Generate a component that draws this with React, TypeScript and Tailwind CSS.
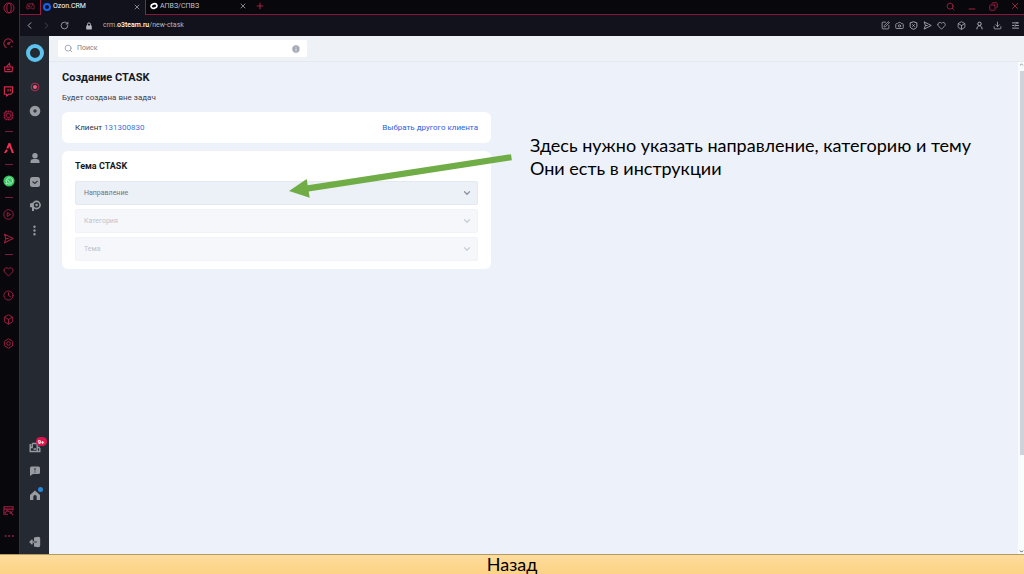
import type { ReactNode } from "react";
import {
  Box,
  Camera,
  ChevronDown,
  ChevronLeft,
  ChevronRight,
  ChevronUp,
  Clock,
  Copy,
  Cpu,
  Download,
  Ellipsis,
  EllipsisVertical,
  Gamepad2,
  Heart,
  Hexagon,
  Info,
  Lock,
  Minus,
  Plus,
  RotateCw,
  Search,
  SquarePen,
  Twitch,
  X,
} from "lucide-react";

function IconButton({ label, className = "", children }: { label: string; className?: string; children: ReactNode }) {
  return (
    <button type="button" aria-label={label} className={`flex shrink-0 items-center justify-center ${className}`}>
      {children}
    </button>
  );
}

function RailButton({ label, children }: { label: string; children: ReactNode }) {
  return (
    <IconButton label={label} className="h-6 w-full">
      {children}
    </IconButton>
  );
}

function Divider() {
  return (
    <div className="flex h-[9px] w-full items-center justify-center">
      <div className="h-px w-2 bg-[#7d1c38]" />
    </div>
  );
}

function SendIcon({ className }: { className: string }) {
  return (
    <svg viewBox="0 0 12 12" className={className} fill="none" stroke="currentColor" strokeWidth="1.100" strokeLinejoin="round">
      <path d="M1.500 1.200L11 6l-9.500 4.800L3.200 6zM3.200 6h3" />
    </svg>
  );
}

function BrowserRail() {
  return (
    <nav aria-label="Opera" className="flex w-5 shrink-0 flex-col items-center border-r border-[#6d1630] bg-[#07070c] pr-0.5 pb-1.5 text-[#a81f43]">
      <IconButton label="Меню Opera" className="mb-[15px] h-4 w-full">
        <svg viewBox="0 0 12 12" className="size-3" fill="none" stroke="currentColor">
          <circle cx="6" cy="6" r="5" />
          <ellipse cx="6" cy="6" rx="2.2" ry="4.6" />
        </svg>
      </IconButton>
      <RailButton label="GX Control">
        <svg viewBox="0 0 12 12" className="size-[11px]" fill="none" stroke="currentColor" strokeWidth="1.1">
          <path d="M4 10.6A5 5 0 1 1 10.8 5M8.5 9.5h2M6 6l2.5-2" />
          <circle cx="6" cy="6.2" r="1" />
        </svg>
      </RailButton>
      <RailButton label="GX Corner">
        <svg viewBox="0 0 12 12" className="size-[11px] text-[#c3264a]" fill="none" stroke="currentColor" strokeWidth="1.2">
          <path d="M1.500 5.500h9l-.6 5H2.100zM3.500 5.500l3.600-4 1 4M4 8h4" />
        </svg>
      </RailButton>
      <RailButton label="Twitch">
        <Twitch className="size-[11px] text-[#d92a50]" strokeWidth={2.5} />
      </RailButton>
      <RailButton label="Модификации">
        <Cpu className="size-[11px]" />
      </RailButton>
      <Divider />
      <RailButton label="Aria">
        <svg viewBox="0 0 12 12" className="size-3 text-[#f02f55]" fill="currentColor">
          <path d="M5.600 1h1.600l3.800 10H8.800L6.300 4.300 5.200 7 3.400 6.100zM3 7.200l1.900 1L3 11H1z" />
        </svg>
      </RailButton>
      <Divider />
      <RailButton label="WhatsApp">
        <svg viewBox="0 0 12 12" className="size-3" fill="none">
          <circle cx="6" cy="6" r="5.600" fill="#32c45d" />
          <path d="M3 9l.5-1.700A3.200 3.200 0 1 1 4.700 8.600z" stroke="#c8f6d5" strokeWidth=".8" />
          <path d="M4.800 4.500c.2 1.600 1.200 2.600 2.700 2.800" stroke="#c8f6d5" strokeWidth="1" />
        </svg>
      </RailButton>
      <Divider />
      <RailButton label="Плеер">
        <svg viewBox="0 0 12 12" className="size-[11px]" fill="none" stroke="currentColor">
          <circle cx="6" cy="6" r="5.200" />
          <path d="M4.600 3.800v4.400L8.300 6z" />
        </svg>
      </RailButton>
      <RailButton label="Мой поток">
        <SendIcon className="size-[11px]" />
      </RailButton>
      <Divider />
      <RailButton label="Закладки">
        <Heart className="size-[11px]" />
      </RailButton>
      <RailButton label="История">
        <Clock className="size-[11px]" />
      </RailButton>
      <RailButton label="Расширения">
        <Box className="size-[11px]" />
      </RailButton>
      <RailButton label="Настройки">
        <span className="relative flex">
          <Hexagon className="size-[11px]" />
          <svg viewBox="0 0 11 11" className="absolute inset-0 size-[11px]" fill="none" stroke="currentColor">
            <circle cx="5.500" cy="5.500" r="1.800" />
          </svg>
        </span>
      </RailButton>
      <div className="mt-auto flex w-full flex-col gap-0.5">
        <RailButton label="Обои">
          <svg viewBox="0 0 12 12" className="size-[11px]" fill="none" stroke="currentColor" strokeWidth="1.100">
            <path d="M5.500 10H1V2h10v4M1 4.500h10M2 8.500l3-2.500 2 1.500" />
            <path d="M7 9.500l3.500-2.500M7.500 7l3.500 4" />
          </svg>
        </RailButton>
        <RailButton label="Ещё">
          <Ellipsis className="size-3" />
        </RailButton>
      </div>
    </nav>
  );
}

function TabBar() {
  return (
    <div className="flex h-[15px] bg-[#07070c] text-[7px] text-[#c2c2c8]">
      <IconButton label="Рабочее пространство" className="w-5 border-b border-[#8a1738] pb-0.5 text-[#b52147]">
        <Gamepad2 className="size-[9px]" />
      </IconButton>
      <div className="flex w-[106px] items-center border-x border-[#a01b40] bg-[#12121c] pr-1 pb-0.5 pl-0.5">
        <button type="button" className="flex flex-1 items-center gap-0.5 text-white">
          <span className="size-2 rounded-full border-2 border-[#1463f0]" />
          Ozon.CRM
        </button>
        <IconButton label="Закрыть вкладку Ozon.CRM">
          <X className="size-2" />
        </IconButton>
      </div>
      <div className="flex flex-1 items-center border-b border-[#8a1738] pb-0.5">
        <div className="flex w-[101px] items-center pl-1">
          <button type="button" className="flex flex-1 items-center gap-0.5">
            <svg viewBox="0 0 8 8" className="size-2" fill="none" stroke="white" strokeWidth="1.600">
              <ellipse cx="4" cy="4" rx="3" ry="2.200" transform="rotate(-15 4 4)" />
            </svg>
            АПВЗ/СПВЗ
          </button>
          <IconButton label="Закрыть вкладку АПВЗ/СПВЗ">
            <X className="size-2" />
          </IconButton>
        </div>
        <IconButton label="Новая вкладка" className="ml-2 text-[#c2264d]">
          <Plus className="size-2.5" />
        </IconButton>
        <div className="ml-auto flex items-center gap-3 pr-1 text-[#c0264b]">
          <IconButton label="Поиск вкладок">
            <Search className="size-[9px]" />
          </IconButton>
          <IconButton label="Свернуть" className="pt-1.5">
            <Minus className="size-2.5" />
          </IconButton>
          <IconButton label="Восстановить">
            <Copy className="size-[9px] -scale-x-100" />
          </IconButton>
          <IconButton label="Закрыть">
            <X className="size-2.5" />
          </IconButton>
        </div>
      </div>
    </div>
  );
}

function AddressBar() {
  return (
    <div className="flex h-[21px] items-center bg-[#12121c] pr-1 pl-1 text-[#b4b4bc]">
      <IconButton label="Назад по истории">
        <ChevronLeft className="size-[11px]" />
      </IconButton>
      <IconButton label="Вперёд по истории" className="ml-1.5 text-[#484852]">
        <ChevronRight className="size-[11px]" />
      </IconButton>
      <IconButton label="Обновить" className="ml-2">
        <RotateCw className="size-[9px]" />
      </IconButton>
      <svg viewBox="0 0 8 8" aria-hidden className="ml-4 size-2">
        <path d="M2.500 4V2.400a1.500 1.500 0 0 1 3 0V4" fill="none" stroke="currentColor" />
        <rect x="1.200" y="3.500" width="5.600" height="4" rx=".5" fill="currentColor" />
      </svg>
      <p className="ml-2.5 text-[7px]">
        crm.<span className="font-medium text-white">o3team.ru</span>/new-ctask
      </p>
      <div className="ml-auto flex items-center gap-[5px]">
        <IconButton label="Поделиться">
          <SquarePen className="size-[9px]" />
        </IconButton>
        <IconButton label="Снимок">
          <Camera className="size-[9px]" />
        </IconButton>
        <IconButton label="Блокировка рекламы">
          <svg viewBox="0 0 12 12" className="size-[9px]" fill="none" stroke="currentColor" strokeWidth="1.200">
            <path d="M6 1l4.500 1.500v4.500c0 2-2 3.300-4.500 4-2.500-.7-4.500-2-4.500-4V2.500zM4.500 4.500l3 3M7.500 4.500l-3 3" />
          </svg>
        </IconButton>
        <IconButton label="Отправить">
          <SendIcon className="size-[9px]" />
        </IconButton>
        <IconButton label="В избранное">
          <Heart className="size-[9px]" />
        </IconButton>
        <IconButton label="Расширения браузера" className="ml-1.5">
          <Box className="size-[9px]" />
        </IconButton>
        <IconButton label="Профиль" className="ml-1">
          <svg viewBox="0 0 12 12" className="size-[9px]" fill="none" stroke="currentColor" strokeWidth="1.300">
            <circle cx="6" cy="3.800" r="2.300" />
            <path d="M2.500 11c.2-3 1.500-4.600 3.500-4.600S9.300 8 9.500 11" />
          </svg>
        </IconButton>
        <IconButton label="Загрузки" className="ml-1">
          <Download className="size-[9px]" />
        </IconButton>
        <IconButton label="Простая настройка" className="ml-1">
          <svg viewBox="0 0 12 12" className="size-[9px]" fill="none" stroke="currentColor" strokeWidth="1.200">
            <path d="M1.500 2.500h9M1.500 6H4M6 6h4.500M1.500 9.500h9M5.500 4.500v3M8 1.500v2" />
          </svg>
        </IconButton>
      </div>
    </div>
  );
}

function AppSidebar() {
  return (
    <nav aria-label="CRM" className="flex w-[29px] shrink-0 flex-col items-center bg-[#252a32] text-[#989ca2]">
      <a href="#home" aria-label="Ozon CRM" className="mb-[5px] flex h-[34px] items-center">
        <span className="size-[18px] rounded-full border-4 border-[#5cc2ee]" />
      </a>
      <RailButton label="Статус">
        <svg viewBox="0 0 10 10" className="size-2.5">
          <circle cx="5" cy="5" r="3.900" fill="none" stroke="#a93354" />
          <circle cx="5" cy="5" r="2" fill="#f7557d" />
        </svg>
      </RailButton>
      <RailButton label="Создать">
        <svg viewBox="0 0 12 12" className="size-3">
          <circle cx="6" cy="6" r="5.300" fill="currentColor" />
          <path d="M6 4.300v3.400M4.300 6h3.400" stroke="#30353d" strokeWidth="1.400" />
        </svg>
      </RailButton>
      <div className="mt-[23px] w-full">
        <RailButton label="Клиенты">
          <svg viewBox="0 0 12 12" className="size-3" fill="currentColor">
            <circle cx="6" cy="3.700" r="2.700" />
            <path d="M1.500 11V9.500C1.500 7.800 3 7 4.500 7h3c1.500 0 3 .8 3 2.500V11z" />
          </svg>
        </RailButton>
        <RailButton label="Задачи">
          <svg viewBox="0 0 12 12" className="size-3">
            <rect x="1" y="1" width="10" height="10" rx="2.500" fill="currentColor" />
            <path d="M3.500 5.500l2.300 2 2.700-2.500" fill="none" stroke="#30353d" strokeWidth="1.200" />
          </svg>
        </RailButton>
        <RailButton label="Рассылки">
          <svg viewBox="0 0 12 12" className="size-3">
            <circle cx="7.500" cy="5" r="3.600" fill="none" stroke="currentColor" strokeWidth="1.600" />
            <path d="M4.500 2.500L1 3.500v3.500l2 .5V11h2V7.500z" fill="currentColor" />
            <circle cx="7.600" cy="5" r="1.300" fill="currentColor" />
          </svg>
        </RailButton>
        <RailButton label="Другие разделы">
          <EllipsisVertical className="size-[13px]" strokeWidth={2.5} />
        </RailButton>
      </div>
      <div className="mt-auto w-full">
        <RailButton label="Новости">
          <span className="relative flex">
            <svg viewBox="0 0 12 12" className="size-3" fill="none" stroke="currentColor" strokeWidth="1.400">
              <path d="M1.200 3v7.500h9.600V7M3.200 2.500h5v8M3.200 2.500v4H1.200M4.500 8h2.500M8.200 6.500h2.600" />
            </svg>
            <span className="absolute -top-1 -right-1.5 flex h-[9px] w-[11px] items-center justify-center rounded-full bg-[#df1350] text-[6px] leading-none font-bold text-white">
              9+
            </span>
          </span>
        </RailButton>
        <RailButton label="Обратная связь">
          <svg viewBox="0 0 12 12" className="size-3">
            <path d="M2.500 1.500h7a1.500 1.500 0 0 1 1.500 1.500v4.500A1.500 1.500 0 0 1 9.500 9H4l-3 2V3a1.500 1.500 0 0 1 1.500-1.500z" fill="currentColor" />
            <path d="M6 3v2.600M6 6.500v1.100" stroke="#30353d" strokeWidth="1.100" />
          </svg>
        </RailButton>
        <RailButton label="Главная">
          <span className="relative flex">
            <svg viewBox="0 0 12 12" className="size-3" fill="currentColor">
              <path d="M6 1.500L1 6v5h3.300V7.800a1.700 1.700 0 0 1 3.400 0V11H11V6z" />
            </svg>
            <span className="absolute -top-0.5 -right-0.5 size-[5px] rounded-full bg-[#2787d8]" />
          </span>
        </RailButton>
        <div className="mt-[23px]">
          <RailButton label="Выйти">
            <svg viewBox="0 0 12 12" className="size-3">
              <path d="M5 1.500L9 .8c1.500 0 2.200.7 2.200 2v6.400c0 1.300-.7 2-2.200 2l-4-.7z" fill="currentColor" />
              <path d="M7.500 6H1.500M3.500 3.700L1.200 6l2.300 2.300" fill="none" stroke="currentColor" strokeWidth="1.500" />
              <path d="M5 6h3" stroke="#30353d" />
            </svg>
          </RailButton>
        </div>
      </div>
    </nav>
  );
}

function TopicSelect({ label, disabled = false }: { label: string; disabled?: boolean }) {
  return (
    <div className="relative">
      <select
        aria-label={label}
        disabled={disabled}
        defaultValue=""
        className="block h-6 w-full appearance-none rounded-xs border border-[#e4e8f0] bg-[#ecf0f7] pr-6 pl-2 text-[7px] text-[#70757f] disabled:border-[#f1f3f8] disabled:bg-[#f5f7fb] disabled:text-[#bfc4cb] disabled:opacity-100"
      >
        <option value="">{label}</option>
      </select>
      <ChevronDown
        aria-hidden
        strokeWidth={3}
        className={`pointer-events-none absolute top-[7px] right-1.5 size-2.5 ${disabled ? "text-[#c9ced6]" : "text-[#8b929e]"}`}
      />
    </div>
  );
}

function TaskForm() {
  return (
    <div className="min-w-0 flex-1 pt-2 pl-[13px]">
      <h1 className="text-[11px] leading-4 font-bold text-[#15191f]">Создание CTASK</h1>
      <p className="mt-1 text-[8px] leading-4 text-[#3c424b]">Будет создана вне задач</p>
      <div className="mt-1.5 flex w-full max-w-[429px] flex-col gap-2">
        <section className="flex h-[31px] items-center justify-between rounded-md bg-white px-[13px] text-[8px] text-[#2c3139]">
          <p>
            Клиент{" "}
            <a href="#client" className="text-[#3a74d8]">
              131300830
            </a>
          </p>
          <a href="#choose" className="text-[#2c62e0]">
            Выбрать другого клиента
          </a>
        </section>
        <section className="rounded-md bg-white px-[13px] pt-2 pb-2">
          <h2 className="text-[9px] leading-[14px] font-bold text-[#15191f]">Тема CTASK</h2>
          <div className="mt-2 flex flex-col gap-1">
            <TopicSelect label="Направление" />
            <TopicSelect label="Категория" disabled />
            <TopicSelect label="Тема" disabled />
          </div>
        </section>
      </div>
    </div>
  );
}

function ScrollTrack() {
  return (
    <div aria-hidden className="flex w-[6px] shrink-0 flex-col items-end bg-[#fafbfc] text-[#7d838b]">
      <ChevronUp className="size-[5px]" strokeWidth={4} />
      <div className="my-1 flex w-1 flex-1 flex-col">
        <div className="basis-[81%] bg-[#ced2da]" />
      </div>
      <ChevronDown className="size-[5px] text-[#30343a]" strokeWidth={4} />
    </div>
  );
}

export default function App() {
  return (
    <div className="relative flex min-h-screen flex-col overflow-hidden bg-[#edf1f9] font-[Roboto,sans-serif]">
      <div className="flex flex-1">
        <BrowserRail />
        <div className="flex min-w-0 flex-1 flex-col">
          <TabBar />
          <AddressBar />
          <div className="flex flex-1">
            <AppSidebar />
            <main className="flex min-w-0 flex-1 flex-col">
              <div className="flex h-[26px] items-center border-b border-[#e5e9ef] bg-[#eef2f6] pl-[9px]">
                <label className="flex h-[17px] w-[249px] items-center gap-1 rounded-xs bg-white px-1.5 text-[#8b9099]">
                  <Search className="size-[9px]" aria-hidden />
                  <input
                    type="search"
                    aria-label="Поиск"
                    placeholder="Поиск"
                    className="min-w-0 flex-1 text-[7px] outline-none placeholder:text-[#7c818a]"
                  />
                  <Info className="size-2.5 fill-[#a3a8b3] text-white" aria-hidden />
                </label>
              </div>
              <div className="flex flex-1">
                <TaskForm />
                <ScrollTrack />
              </div>
            </main>
          </div>
        </div>
      </div>
      <button
        type="button"
        className="flex h-5 items-center justify-center border-t border-[#b29a68] bg-linear-to-b from-[#fddc9c] to-[#fdd384] font-[Lato,Noto_Sans,sans-serif] text-[18px] leading-[19px] text-black"
      >
        Назад
      </button>
      <svg aria-hidden viewBox="0 0 223 44" className="pointer-events-none absolute top-[154px] left-[289px] h-[44px] w-[223px]">
        <path d="M0 37L17.700 25l1 6.200L222 .2l.9 6L19.700 37.400l1 6.300z" fill="#70ad47" />
      </svg>
      <p className="absolute top-[134px] left-[530px] font-[Lato,Noto_Sans,sans-serif] text-[18px] leading-[23px] whitespace-nowrap text-black">
        Здесь нужно указать направление, категорию и тему
        <br />
        Они есть в инструкции
      </p>
    </div>
  );
}
